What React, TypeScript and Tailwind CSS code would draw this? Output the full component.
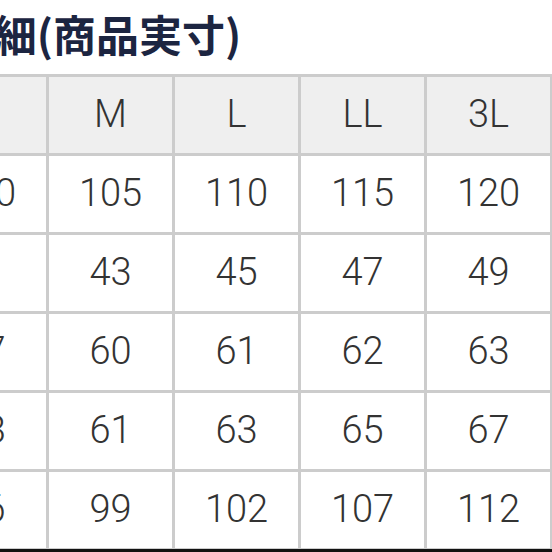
import React from 'react';

// Size chart (商品実寸), cropped view: the label and S columns sit partly off-screen
const sizes = ['S', 'M', 'L', 'LL', '3L'];

const rows: { label: string; values: string[] }[] = [
  { label: '身幅', values: ['100', '105', '110', '115', '120'] },
  { label: '肩幅', values: ['41', '43', '45', '47', '49'] },
  { label: '袖丈', values: ['57', '60', '61', '62', '63'] },
  { label: '着丈', values: ['58', '61', '63', '65', '67'] },
  { label: '裾周り', values: ['96', '99', '102', '107', '112'] },
];

const Cell = ({ children, head }: { children?: React.ReactNode; head?: boolean }) => (
  <div
    className={`h-[76px] pb-[3px] flex items-center justify-center text-[38px] leading-none font-light text-[#333333] ${
      head ? 'bg-[#efefef]' : 'bg-white'
    }`}
  >
    {children}
  </div>
);

export default function App() {
  return (
    <div className="w-[552px] h-[552px] overflow-hidden bg-white font-['Roboto','Noto_Sans_CJK_JP',sans-serif] flex flex-col">
      <div className="-ml-[182px] w-max flex flex-col">
        {/* Title */}
        <h2 className="ml-[5px] pt-[12px] mb-[19px] text-[43px] leading-none font-bold text-[#1c2541] whitespace-nowrap font-['Noto_Sans_CJK_JP',sans-serif]">
          サイズ詳細(商品実寸)
        </h2>

        {/* Table */}
        <div className="grid grid-cols-[99px_123px_123px_123px_123px_123px] gap-[3px] px-[3px] pt-[3px] pb-px bg-[#cccccc]">
          <Cell head>サイズ</Cell>
          {sizes.map((s) => (
            <Cell key={s} head>
              {s}
            </Cell>
          ))}
          {rows.map((row) => (
            <React.Fragment key={row.label}>
              <Cell>{row.label}</Cell>
              {row.values.map((v, i) => (
                <Cell key={i}>{v}</Cell>
              ))}
            </React.Fragment>
          ))}
        </div>
      </div>
      <div className="h-[3px] bg-[#111111] shrink-0" />
    </div>
  );
}
